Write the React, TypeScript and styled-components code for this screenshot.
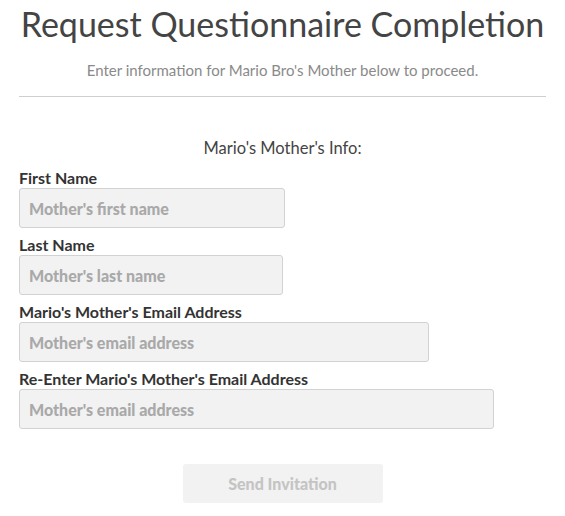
import React from "react";
import styled, { createGlobalStyle } from "styled-components";

const Global = createGlobalStyle`
  html, body { margin: 0; padding: 0; background: #fff; }
  body { font-family: Lato, "Open Sans", sans-serif; }
  * { box-sizing: border-box; }
`;

const Page = styled.div`
  width: 565px;
  padding: 0 19px;
`;

const Title = styled.h1`
  margin: 0 -19px;
  padding-top: 2px;
  font-size: 34px;
  line-height: 44px;
  font-weight: 400;
  color: #444;
  text-align: center;
  white-space: nowrap;
`;

const Subtitle = styled.p`
  margin: 14px 0 0;
  font-size: 15px;
  line-height: 20px;
  color: #8a8a8a;
  text-align: center;
`;

const Rule = styled.hr`
  margin: 16px 0 0;
  border: 0;
  border-top: 1px solid #cfcfcf;
`;

const SectionTitle = styled.h2`
  margin: 40px 0 0;
  font-size: 16.5px;
  line-height: 22px;
  font-weight: 400;
  color: #444;
  text-align: center;
`;

const Form = styled.form`
  display: flex;
  flex-direction: column;
  gap: 8px;
  margin-top: 10px;
`;

const Field = styled.div`
  display: flex;
  flex-direction: column;
  align-items: flex-start;
`;

const Label = styled.label`
  font-size: 16px;
  line-height: 18px;
  margin-bottom: 1px;
  font-weight: 700;
  color: #333;
`;

const Input = styled.input<{ $w: number }>`
  width: ${(p) => p.$w}px;
  height: 40px;
  padding: 0 9px;
  border: 1px solid #d2d2d2;
  border-radius: 3px;
  background: #f2f2f2;
  font-family: inherit;
  font-size: 16px;
  font-weight: 900;
  color: #333;
  outline: none;
  &::placeholder { color: #a9a9a9; font-weight: 900; }
`;

const Actions = styled.div`
  display: flex;
  justify-content: center;
  margin-top: 35px;
`;

const Button = styled.button`
  width: 200px;
  height: 39px;
  border: 0;
  border-radius: 3px;
  background: #f2f2f2;
  font-family: inherit;
  font-size: 16px;
  font-weight: 900;
  color: #c4c4c4;
`;

const fields = [
  { label: "First Name", placeholder: "Mother's first name", w: 266 },
  { label: "Last Name", placeholder: "Mother's last name", w: 264 },
  { label: "Mario's Mother's Email Address", placeholder: "Mother's email address", w: 410 },
  { label: "Re-Enter Mario's Mother's Email Address", placeholder: "Mother's email address", w: 475 },
];

export default function App() {
  return (
    <Page>
      <Global />
      <Title>Request Questionnaire Completion</Title>
      <Subtitle>Enter information for Mario Bro's Mother below to proceed.</Subtitle>
      <Rule />
      <SectionTitle>Mario's Mother's Info:</SectionTitle>
      <Form onSubmit={(e) => e.preventDefault()}>
        {fields.map((f, i) => (
          <Field key={i}>
            <Label htmlFor={`f${i}`}>{f.label}</Label>
            <Input id={`f${i}`} $w={f.w} placeholder={f.placeholder} />
          </Field>
        ))}
      </Form>
      <Actions>
        <Button type="button" disabled>Send Invitation</Button>
      </Actions>
    </Page>
  );
}
